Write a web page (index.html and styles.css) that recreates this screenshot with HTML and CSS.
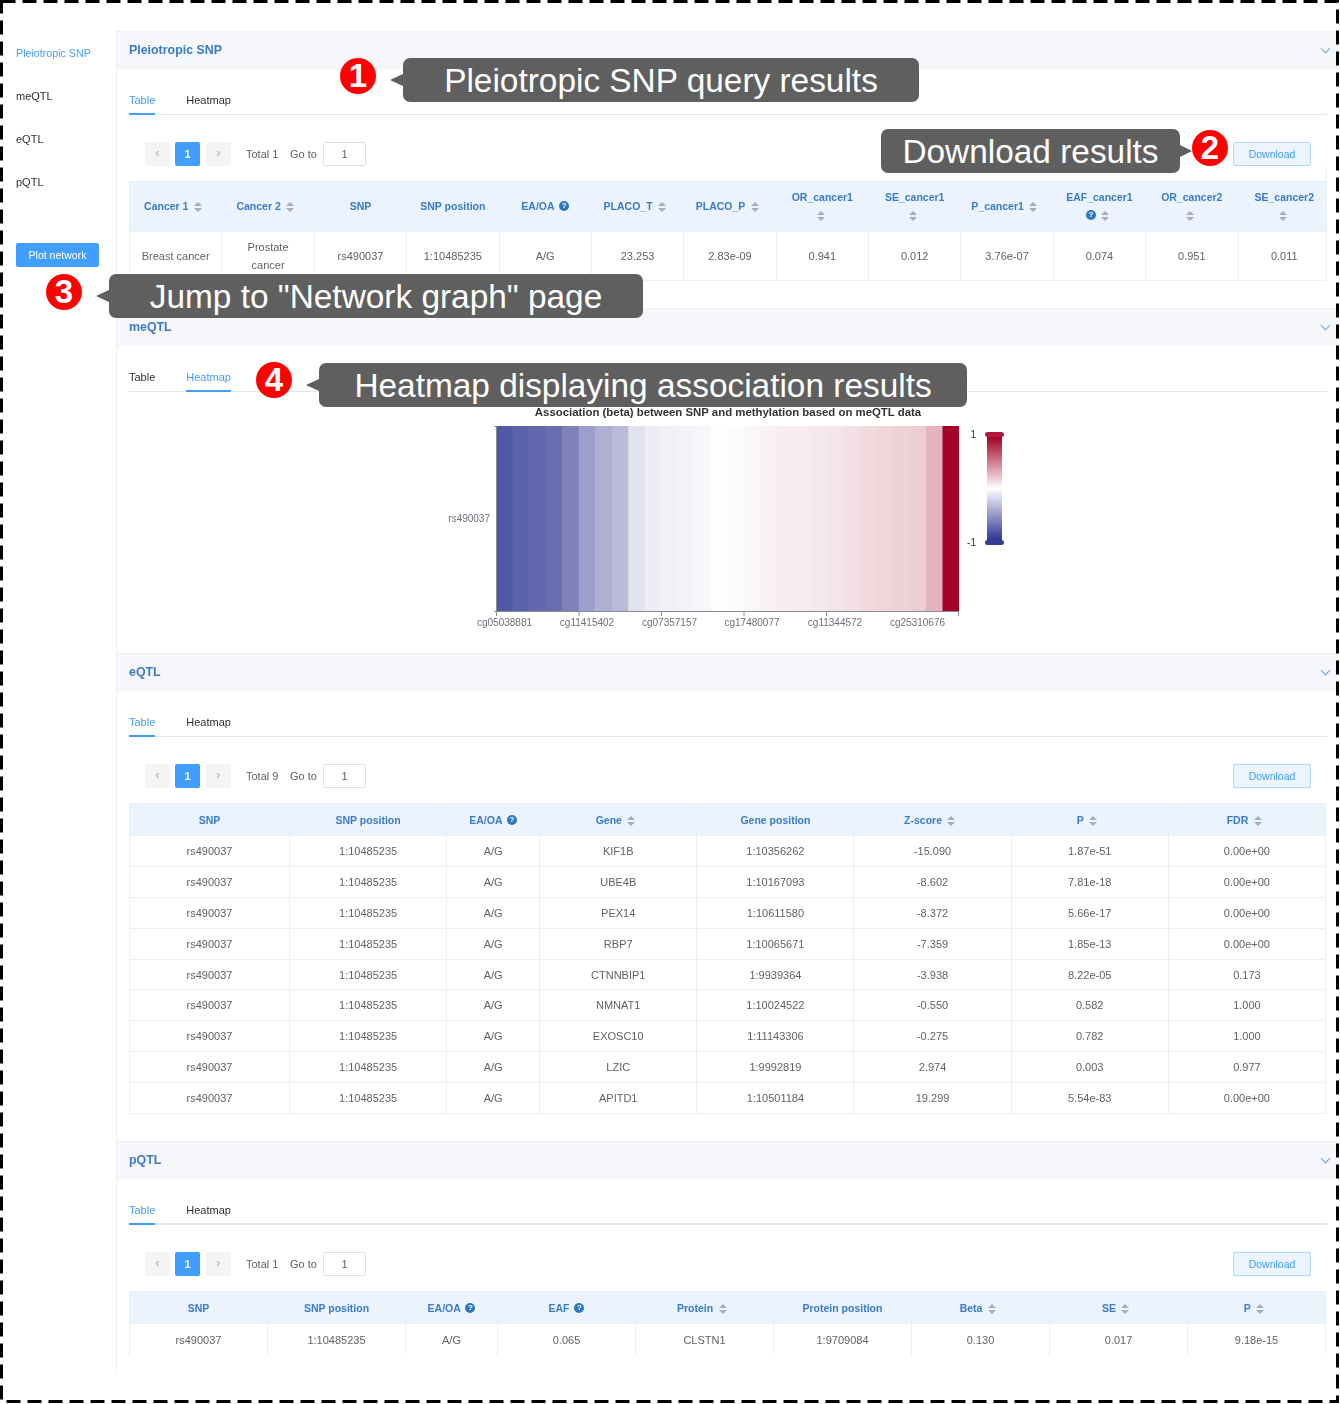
FILE: index.html
```html
<!DOCTYPE html>
<html lang="en">
<head>
    <meta charset="UTF-8">
    <title>Query results</title>
    <link rel="stylesheet" href="styles.css">
</head>
<body>
<div class="page">
    <nav class="sidebar">
        <a class="side-link active">Pleiotropic SNP</a>
        <a class="side-link">meQTL</a>
        <a class="side-link">eQTL</a>
        <a class="side-link">pQTL</a>
        <button class="plot-btn">Plot network</button>
    </nav>

    <main class="main">
        <!-- Pleiotropic SNP -->
        <section>
            <header class="panel-head"><span>Pleiotropic SNP</span><i class="chevron"></i></header>
            <div class="panel-body">
                <div class="tabs">
                    <span class="tab active">Table</span>
                    <span class="tab">Heatmap</span>
                </div>
                <div class="toolbar">
                    <div class="pager">
                        <span class="page-btn">&#8249;</span>
                        <span class="page-btn current">1</span>
                        <span class="page-btn next">&#8250;</span>
                        <span class="total">Total 1</span>
                        <span class="goto">Go to</span>
                        <span class="page-input">1</span>
                    </div>
                    <button class="download">Download</button>
                </div>
                <div class="scroll-x">
                    <table class="grid snp-table">
                        <thead>
                            <tr>
                                <th>Cancer 1 <i class="sort"></i></th>
                                <th>Cancer 2 <i class="sort"></i></th>
                                <th>SNP</th>
                                <th>SNP position</th>
                                <th>EA/OA <i class="help">?</i></th>
                                <th>PLACO_T <i class="sort"></i></th>
                                <th>PLACO_P <i class="sort"></i></th>
                                <th>OR_cancer1 <i class="sort"></i></th>
                                <th>SE_cancer1 <i class="sort"></i></th>
                                <th>P_cancer1 <i class="sort"></i></th>
                                <th>EAF_cancer1 <i class="help">?</i> <i class="sort"></i></th>
                                <th>OR_cancer2 <i class="sort"></i></th>
                                <th>SE_cancer2 <i class="sort"></i></th>
                            </tr>
                        </thead>
                        <tbody>
                            <tr>
                                <td>Breast cancer</td><td class="narrow">Prostate cancer</td><td>rs490037</td><td>1:10485235</td><td>A/G</td><td>23.253</td><td>2.83e-09</td><td>0.941</td><td>0.012</td><td>3.76e-07</td><td>0.074</td><td>0.951</td><td>0.011</td>
                            </tr>
                        </tbody>
                    </table>
                </div>
            </div>
        </section>

        <!-- meQTL -->
        <section>
            <header class="panel-head"><span>meQTL</span><i class="chevron"></i></header>
            <div class="panel-body no-gap">
                <div class="tabs">
                    <span class="tab dark">Table</span>
                    <span class="tab active">Heatmap</span>
                </div>
                <svg class="heatmap" viewBox="129 392 1197 261" width="1197" height="261">
                    <defs>
                        <linearGradient id="legend" x1="0" y1="0" x2="0" y2="1">
                            <stop offset="0" stop-color="#a50026"/>
                            <stop offset="0.5" stop-color="#ffffff"/>
                            <stop offset="1" stop-color="#313695"/>
                        </linearGradient>
                    </defs>
                    <text class="hm-title" x="728" y="416">Association (beta) between SNP and methylation based on meQTL data</text>
                    <g>
                        <rect x="496" y="426" width="17" height="185" fill="#5059a6"/>
                        <rect x="512.5" y="426" width="17" height="185" fill="#5a62a9"/>
                        <rect x="529.1" y="426" width="17" height="185" fill="#6268ad"/>
                        <rect x="545.6" y="426" width="17" height="185" fill="#676db0"/>
                        <rect x="562.1" y="426" width="17" height="185" fill="#7f82ba"/>
                        <rect x="578.7" y="426" width="17" height="185" fill="#9d9ecb"/>
                        <rect x="595.2" y="426" width="17" height="185" fill="#aeafd3"/>
                        <rect x="611.8" y="426" width="17" height="185" fill="#babbdb"/>
                        <rect x="628.3" y="426" width="17" height="185" fill="#e2e2ee"/>
                        <rect x="644.8" y="426" width="17" height="185" fill="#ecedf5"/>
                        <rect x="661.4" y="426" width="17" height="185" fill="#f0f0f6"/>
                        <rect x="677.9" y="426" width="17" height="185" fill="#f3f3f8"/>
                        <rect x="694.4" y="426" width="17" height="185" fill="#f7f7fb"/>
                        <rect x="711" y="426" width="17" height="185" fill="#fefefe"/>
                        <rect x="727.5" y="426" width="17" height="185" fill="#fdfcfc"/>
                        <rect x="744" y="426" width="17" height="185" fill="#fbf6f7"/>
                        <rect x="760.6" y="426" width="17" height="185" fill="#f9f1f3"/>
                        <rect x="777.1" y="426" width="17" height="185" fill="#f7ecee"/>
                        <rect x="793.6" y="426" width="17" height="185" fill="#f7ebed"/>
                        <rect x="810.2" y="426" width="17" height="185" fill="#f6e9ec"/>
                        <rect x="826.7" y="426" width="17" height="185" fill="#f5e6e9"/>
                        <rect x="843.3" y="426" width="17" height="185" fill="#f3e0e4"/>
                        <rect x="859.8" y="426" width="17" height="185" fill="#f1d9de"/>
                        <rect x="876.3" y="426" width="17" height="185" fill="#f0d6db"/>
                        <rect x="892.9" y="426" width="17" height="185" fill="#efd2d8"/>
                        <rect x="909.4" y="426" width="17" height="185" fill="#eeced5"/>
                        <rect x="925.9" y="426" width="17" height="185" fill="#e4b3c0"/>
                        <rect x="942.5" y="426" width="16.5" height="185" fill="#a50029"/>
                    </g>
                    <path class="hm-axis" d="M494 426.5H496.5V611.5H959M494 611.5H496.5M496.5 611.5V616M579 611.5V616M661.5 611.5V616M744 611.5V616M826.5 611.5V616M958.5 611.5V616"/>
                    <text class="hm-label end" x="490" y="522">rs490037</text>
                    <text class="hm-label" x="504.5" y="626">cg05038881</text>
                    <text class="hm-label" x="587" y="626">cg11415402</text>
                    <text class="hm-label" x="669.5" y="626">cg07357157</text>
                    <text class="hm-label" x="752" y="626">cg17480077</text>
                    <text class="hm-label" x="835" y="626">cg11344572</text>
                    <text class="hm-label" x="917.5" y="626">cg25310676</text>
                    <rect x="987" y="437" width="15" height="103" fill="url(#legend)"/>
                    <rect x="985" y="432" width="19" height="5" rx="2.5" fill="#b2183d"/>
                    <rect x="985" y="540" width="19" height="5" rx="2.5" fill="#373c96"/>
                    <text class="hm-legend end" x="976" y="438">1</text>
                    <text class="hm-legend end" x="976" y="546">-1</text>
                </svg>
            </div>
        </section>

        <!-- eQTL -->
        <section>
            <header class="panel-head"><span>eQTL</span><i class="chevron"></i></header>
            <div class="panel-body">
                <div class="tabs">
                    <span class="tab active">Table</span>
                    <span class="tab">Heatmap</span>
                </div>
                <div class="toolbar">
                    <div class="pager">
                        <span class="page-btn">&#8249;</span>
                        <span class="page-btn current">1</span>
                        <span class="page-btn next">&#8250;</span>
                        <span class="total">Total 9</span>
                        <span class="goto">Go to</span>
                        <span class="page-input">1</span>
                    </div>
                    <button class="download">Download</button>
                </div>
                <table class="grid eqtl-table">
                    <thead>
                        <tr>
                            <th>SNP</th>
                            <th>SNP position</th>
                            <th>EA/OA <i class="help">?</i></th>
                            <th>Gene <i class="sort"></i></th>
                            <th>Gene position</th>
                            <th>Z-score <i class="sort"></i></th>
                            <th>P <i class="sort"></i></th>
                            <th>FDR <i class="sort"></i></th>
                        </tr>
                    </thead>
                    <tbody>
                        <tr><td>rs490037</td><td>1:10485235</td><td>A/G</td><td>KIF1B</td><td>1:10356262</td><td>-15.090</td><td>1.87e-51</td><td>0.00e+00</td></tr>
                        <tr><td>rs490037</td><td>1:10485235</td><td>A/G</td><td>UBE4B</td><td>1:10167093</td><td>-8.602</td><td>7.81e-18</td><td>0.00e+00</td></tr>
                        <tr><td>rs490037</td><td>1:10485235</td><td>A/G</td><td>PEX14</td><td>1:10611580</td><td>-8.372</td><td>5.66e-17</td><td>0.00e+00</td></tr>
                        <tr><td>rs490037</td><td>1:10485235</td><td>A/G</td><td>RBP7</td><td>1:10065671</td><td>-7.359</td><td>1.85e-13</td><td>0.00e+00</td></tr>
                        <tr><td>rs490037</td><td>1:10485235</td><td>A/G</td><td>CTNNBIP1</td><td>1:9939364</td><td>-3.938</td><td>8.22e-05</td><td>0.173</td></tr>
                        <tr><td>rs490037</td><td>1:10485235</td><td>A/G</td><td>NMNAT1</td><td>1:10024522</td><td>-0.550</td><td>0.582</td><td>1.000</td></tr>
                        <tr><td>rs490037</td><td>1:10485235</td><td>A/G</td><td>EXOSC10</td><td>1:11143306</td><td>-0.275</td><td>0.782</td><td>1.000</td></tr>
                        <tr><td>rs490037</td><td>1:10485235</td><td>A/G</td><td>LZIC</td><td>1:9992819</td><td>2.974</td><td>0.003</td><td>0.977</td></tr>
                        <tr><td>rs490037</td><td>1:10485235</td><td>A/G</td><td>APITD1</td><td>1:10501184</td><td>19.299</td><td>5.54e-83</td><td>0.00e+00</td></tr>
                    </tbody>
                </table>
            </div>
        </section>

        <!-- pQTL -->
        <section>
            <header class="panel-head"><span>pQTL</span><i class="chevron"></i></header>
            <div class="panel-body last">
                <div class="tabs thick">
                    <span class="tab active">Table</span>
                    <span class="tab">Heatmap</span>
                </div>
                <div class="toolbar">
                    <div class="pager">
                        <span class="page-btn">&#8249;</span>
                        <span class="page-btn current">1</span>
                        <span class="page-btn next">&#8250;</span>
                        <span class="total">Total 1</span>
                        <span class="goto">Go to</span>
                        <span class="page-input">1</span>
                    </div>
                    <button class="download">Download</button>
                </div>
                <div class="clip">
                    <table class="grid pqtl-table">
                        <thead>
                            <tr>
                                <th>SNP</th>
                                <th>SNP position</th>
                                <th>EA/OA <i class="help">?</i></th>
                                <th>EAF <i class="help">?</i></th>
                                <th>Protein <i class="sort"></i></th>
                                <th>Protein position</th>
                                <th>Beta <i class="sort"></i></th>
                                <th>SE <i class="sort"></i></th>
                                <th>P <i class="sort"></i></th>
                            </tr>
                        </thead>
                        <tbody>
                            <tr><td>rs490037</td><td>1:10485235</td><td>A/G</td><td>0.065</td><td>CLSTN1</td><td>1:9709084</td><td>0.130</td><td>0.017</td><td>9.18e-15</td></tr>
                        </tbody>
                    </table>
                </div>
            </div>
        </section>
    </main>

    <!-- annotations laid over the screenshot -->
    <span class="badge badge-1">1</span>
    <div class="note note-1 arrow-left">Pleiotropic SNP query results</div>
    <div class="note note-2 arrow-right">Download results</div>
    <span class="badge badge-2">2</span>
    <span class="badge badge-3">3</span>
    <div class="note note-3 arrow-left">Jump to "Network graph" page</div>
    <span class="badge badge-4">4</span>
    <div class="note note-4 arrow-left">Heatmap displaying association results</div>

    <svg class="frame" width="1340" height="1404">
        <rect x="1.5" y="1.5" width="1336" height="1400" fill="none" stroke="#000" stroke-width="3" stroke-dasharray="14 7"/>
    </svg>
</div>
</body>
</html>
```

FILE: styles.css
```css
* {
    box-sizing: border-box;
}
body {
    margin: 0;
    font-family: "Liberation Sans", Arial, sans-serif;
    font-size: 11px;
    color: #606266;
    background: #fff;
}
.page {
    position: relative;
    display: flex;
    align-items: flex-start;
    width: 1340px;
    height: 1404px;
    overflow: hidden;
}

/* side menu */
.sidebar {
    display: flex;
    flex-direction: column;
    align-items: flex-start;
    width: 116px;
    padding: 32px 0 0 16px;
    filter: blur(0.4px);
}
.side-link {
    height: 43px;
    line-height: 43px;
    color: #303133;
}
.side-link.active {
    color: #409eff;
    font-size: 10.7px;
}
.plot-btn {
    width: 83px;
    height: 24px;
    margin-top: 39px;
    padding: 0;
    border: none;
    border-radius: 2px;
    background-color: #409eff;
    color: white;
    font: inherit;
    font-size: 10.5px;
}

/* main column */
.main {
    width: 1222px;
    height: 1342px;
    margin-top: 31px;
    border-left: 1px solid #eef0f5;
    filter: blur(0.4px);
}
.panel-head {
    display: flex;
    justify-content: space-between;
    align-items: center;
    height: 38px;
    padding: 0 7px 2px 12px;
    background-color: #f5f7fb;
    border-top: 1px solid #eef0f5;
    color: #3a7bc8;
    font-size: 12.4px;
    font-weight: bold;
}
.chevron {
    width: 7px;
    height: 7px;
    margin: 0 2px 3px 0;
    border-right: 1px solid #6ba5e0;
    border-bottom: 1px solid #6ba5e0;
    transform: rotate(45deg);
}
.panel-body {
    padding: 0 11px 27px 12px;
}
.panel-body.no-gap {
    padding-bottom: 0;
}
.panel-body.last {
    padding-bottom: 0;
}

/* tabs */
.tabs {
    display: flex;
    gap: 31px;
    height: 28px;
    margin-top: 18px;
    border-bottom: 1px solid #e4e7ed;
}
.tabs.thick {
    border-bottom-width: 2px;
}
.tab {
    height: 28px;
    line-height: 26px;
    color: #303133;
}
.tab.dark {
    color: #303133;
}
.tab.active {
    color: #409eff;
    border-bottom: 2px solid #409eff;
}

/* pager + download */
.toolbar {
    display: flex;
    justify-content: space-between;
    align-items: center;
    height: 24px;
    margin-top: 27px;
    padding: 0 16px;
}
.pager {
    display: flex;
    align-items: center;
    height: 24px;
}
.page-btn {
    width: 25px;
    height: 24px;
    margin-right: 5px;
    border-radius: 2px;
    background-color: #f4f4f5;
    color: #a8abb2;
    line-height: 22px;
    text-align: center;
    font-size: 13px;
}
.page-btn.current {
    background-color: #409eff;
    color: white;
    font-size: 11px;
    font-weight: bold;
    line-height: 24px;
}
.page-btn.next {
    margin-left: 1px;
    margin-right: 15px;
}
.total {
    width: 44px;
}
.goto {
    width: 33px;
}
.page-input {
    width: 43px;
    height: 24px;
    border: 1px solid #dcdfe6;
    border-radius: 2px;
    line-height: 22px;
    text-align: center;
}
.download {
    width: 78px;
    height: 24px;
    padding: 0;
    border: 1px solid #b3d8ff;
    border-radius: 2px;
    background-color: #ecf5ff;
    color: #409eff;
    font: inherit;
    font-size: 10.5px;
}

/* tables */
.grid {
    width: 1197px;
    margin-top: 15px;
    border-collapse: collapse;
    table-layout: fixed;
}
.grid th, .grid td {
    padding: 0 10px;
    border: 1px solid #ebeef5;
    text-align: center;
    line-height: 18px;
}
.grid th {
    height: 32px;
    background-color: #ebf3fe;
    color: #3a7bc8;
    font-size: 10.5px;
}
.grid td {
    height: 30.9px;
}
/* first table is a little wider than its panel and gets cut on the right */
.scroll-x {
    overflow: hidden;
    border-right: 1px solid #ebeef5;
}
.snp-table {
    width: 1202px;
}
.snp-table th {
    height: 50px;
    padding: 0 8px 2px;
}
.snp-table td {
    height: 49px;
}
.snp-table td.narrow {
    padding: 0 20px;
}
.eqtl-table th:nth-child(1) {
    width: 160px;
}
.eqtl-table th:nth-child(3) {
    width: 93px;
}
.pqtl-table th:nth-child(3) {
    width: 92px;
}
.pqtl-table td {
    height: 33px;
}
.clip {
    height: 79px;
    overflow: hidden;
}
/* the caret box is wider than the arrows, so labels sit off-centre */
.sort {
    display: inline-flex;
    flex-direction: column;
    align-items: center;
    gap: 2px;
    width: 19px;
    margin-left: -3px;
    vertical-align: middle;
}
.sort::before, .sort::after {
    content: "";
    width: 0;
    border-left: 4px solid transparent;
    border-right: 4px solid transparent;
}
.sort::before {
    border-bottom: 4px solid #a8adb5;
}
.sort::after {
    border-top: 4px solid #a8adb5;
}
.help {
    display: inline-block;
    width: 10px;
    height: 10px;
    margin-left: 2px;
    border-radius: 50%;
    background-color: #2b78c2;
    color: white;
    font-size: 8px;
    font-style: normal;
    line-height: 10px;
    vertical-align: 2px;
}

/* heatmap chart */
.heatmap {
    display: block;
}
.hm-title {
    font-size: 11.4px;
    font-weight: bold;
    fill: #333;
    text-anchor: middle;
}
.hm-label {
    font-size: 10px;
    fill: #6e7079;
    text-anchor: middle;
}
.hm-legend {
    font-size: 10px;
    fill: #333;
}
.end {
    text-anchor: end;
}
.hm-axis {
    fill: none;
    stroke: #8a8c95;
    stroke-width: 1;
}

/* callouts */
.note {
    position: absolute;
    height: 44px;
    border-radius: 7px;
    background-color: #5f5f5f;
    color: white;
    font-size: 33.4px;
    line-height: 45px;
    text-align: center;
    white-space: nowrap;
}
.arrow-left::before, .arrow-right::after {
    content: "";
    position: absolute;
    top: 16px;
    border-top: 6px solid transparent;
    border-bottom: 6px solid transparent;
}
.arrow-left::before {
    left: -13px;
    border-right: 13px solid #5f5f5f;
}
.arrow-right::after {
    right: -12px;
    border-left: 12px solid #5f5f5f;
}
.note-1 {
    top: 58px;
    left: 403px;
    width: 516px;
}
.note-2 {
    top: 129px;
    left: 881px;
    width: 299px;
}
.note-3 {
    top: 274px;
    left: 109px;
    width: 534px;
}
.note-4 {
    top: 363px;
    left: 319px;
    width: 648px;
}
.badge {
    position: absolute;
    width: 36px;
    height: 36px;
    border-radius: 50%;
    background-color: #f00;
    color: white;
    font-size: 33px;
    font-weight: bold;
    line-height: 36px;
    text-align: center;
}
.badge-1 {
    top: 58px;
    left: 340px;
}
.badge-2 {
    top: 130px;
    left: 1192px;
}
.badge-3 {
    top: 274px;
    left: 46px;
}
.badge-4 {
    top: 362px;
    left: 256px;
}
.frame {
    position: absolute;
    top: 0;
    left: 0;
    pointer-events: none;
}
```
